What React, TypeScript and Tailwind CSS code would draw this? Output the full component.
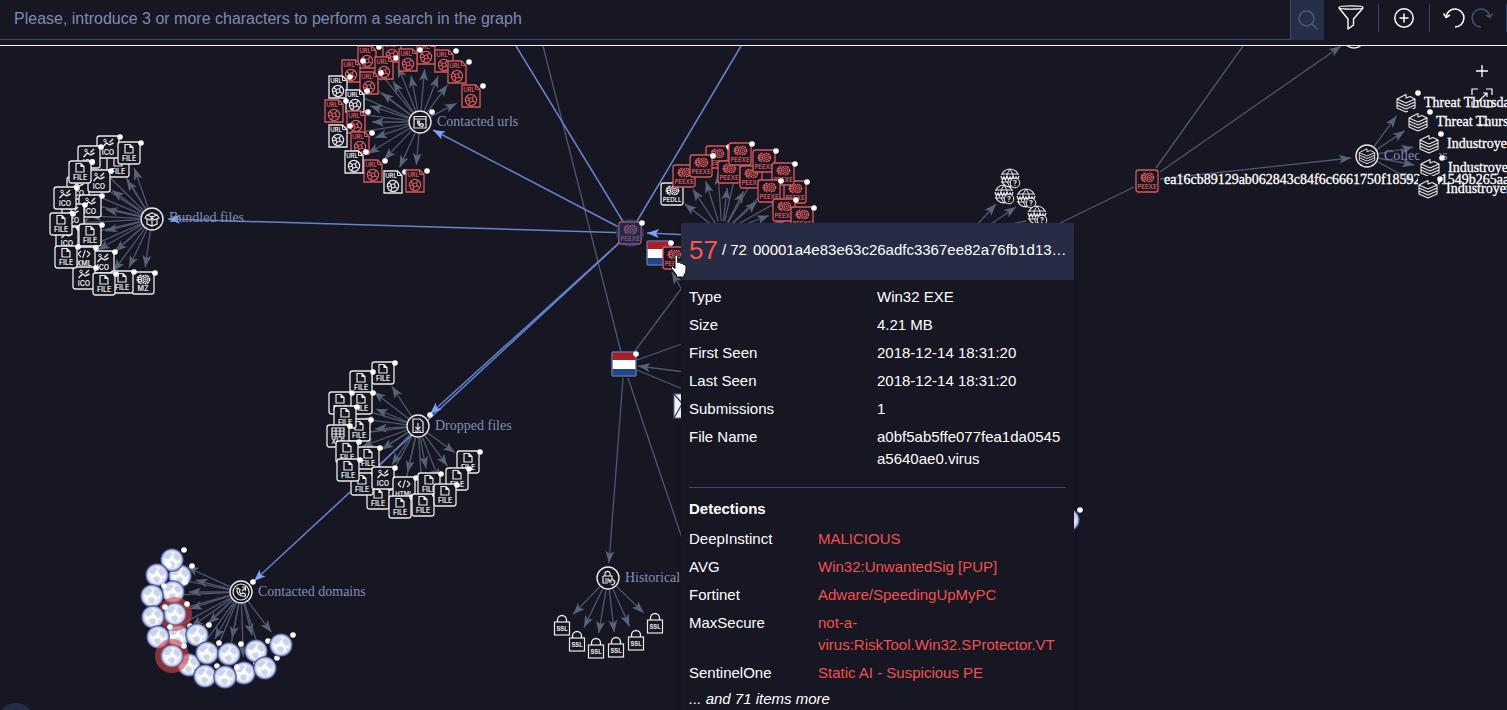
import type { ReactNode } from 'react'

type Point = [number, number]
type NodeKind = 'url' | 'file' | 'ico' | 'xml' | 'html' | 'xls' | 'mz' | 'peexe' | 'pedll' | 'globe' | 'ssl' | 'www' | 'stack'
type GraphNode = { x: number; y: number; kind: NodeKind; color?: string; alert?: boolean }

const BG = '#171623'
const WHITE = '#e9e9ec'
const RED = '#d9595b'
const EDGE = '#4d596f'
const BLUE = '#6584cf'

const node = (kind: NodeKind, x: number, y: number, color = WHITE, alert = false): GraphNode => ({ x, y, kind, color, alert })

// Nodes are listed bottom to top, later ones overlap earlier ones
const urlNodes = [
  node('url', 392, 51, RED),
  node('url', 367, 57, RED),
  node('url', 384, 68, RED),
  node('url', 426, 53, RED),
  node('url', 408, 60, RED),
  node('url', 444, 61, RED),
  node('url', 457, 72, RED),
  node('url', 471, 96, RED),
  node('url', 351, 71, RED),
  node('url', 369, 83, RED),
  node('url', 338, 87),
  node('url', 355, 101),
  node('url', 356, 122, RED),
  node('url', 334, 111, RED),
  node('url', 360, 143, RED),
  node('url', 338, 136),
  node('url', 373, 171, RED),
  node('url', 354, 162),
  node('url', 393, 182),
  node('url', 415, 181, RED),
]

const bundledNodes = [
  node('file', 118, 166),
  node('ico', 108, 147),
  node('file', 129, 153),
  node('ico', 89, 157),
  node('ico', 78, 188),
  node('ico', 99, 181),
  node('file', 80, 172),
  node('ico', 90, 206),
  node('ico', 73, 215),
  node('ico', 65, 198),
  node('ico', 67, 238),
  node('file', 90, 235),
  node('file', 61, 224),
  node('ico', 103, 262),
  node('xml', 84, 258),
  node('ico', 84, 278),
  node('file', 66, 257),
  node('mz', 143, 283),
  node('file', 122, 282),
  node('file', 104, 284),
]

const droppedNodes = [
  node('file', 383, 373),
  node('file', 361, 382),
  node('file', 361, 403),
  node('file', 340, 403),
  node('file', 359, 430),
  node('file', 345, 417),
  node('xls', 338, 436),
  node('file', 368, 458),
  node('file', 347, 452),
  node('file', 378, 498),
  node('file', 362, 484),
  node('file', 348, 470),
  node('ico', 383, 478),
  node('html', 404, 488),
  node('file', 429, 484),
  node('file', 400, 507),
  node('file', 423, 505),
  node('file', 468, 462),
  node('file', 457, 479),
  node('file', 445, 495),
]

const domainNodes = [
  node('globe', 180, 576),
  node('globe', 172, 560),
  node('globe', 157, 575),
  node('globe', 173, 592),
  node('globe', 152, 596),
  node('globe', 178, 636),
  node('globe', 175, 614, WHITE, true),
  node('globe', 153, 617),
  node('globe', 158, 637),
  node('globe', 197, 635),
  node('globe', 189, 665),
  node('globe', 172, 656, WHITE, true),
  node('globe', 207, 653),
  node('globe', 229, 654),
  node('globe', 205, 676),
  node('globe', 244, 673),
  node('globe', 225, 677),
  node('globe', 256, 651),
  node('globe', 265, 668),
  node('globe', 281, 645),
]

const sslNodes = [
  node('ssl', 562, 626),
  node('ssl', 577, 642),
  node('ssl', 596, 649),
  node('ssl', 616, 648),
  node('ssl', 636, 641),
  node('ssl', 655, 624),
]

const peNodes = [
  node('pedll', 672, 194),
  node('peexe', 684, 176, RED),
  node('peexe', 717, 157, RED),
  node('peexe', 701, 166, RED),
  node('peexe', 729, 172, RED),
  node('peexe', 740, 154, RED),
  node('peexe', 751, 177, RED),
  node('peexe', 764, 161, RED),
  node('peexe', 795, 192, RED),
  node('peexe', 783, 174, RED),
  node('peexe', 769, 191, RED),
  node('peexe', 784, 210, RED),
  node('peexe', 802, 218, RED),
]

const wwwNodes = [node('www', 1004, 194), node('www', 1010, 178), node('www', 1026, 198), node('www', 1037, 215)]

const collections = [
  { ...node('stack', 1406, 103), label: 'Threat Thursday' },
  { ...node('stack', 1418, 122), label: 'Threat Thursday' },
  { ...node('stack', 1429, 144), label: 'Industroyer' },
  { ...node('stack', 1430, 168), label: 'Industroyer' },
  { ...node('stack', 1428, 189), label: 'Industroyer' },
]

const summary = [
  ['Type', 'Win32 EXE'],
  ['Size', '4.21 MB'],
  ['First Seen', '2018-12-14 18:31:20'],
  ['Last Seen', '2018-12-14 18:31:20'],
  ['Submissions', '1'],
  ['File Name', 'a0bf5ab5ffe077fea1da0545a5640ae0.virus'],
]

const detections = [
  ['DeepInstinct', 'MALICIOUS'],
  ['AVG', 'Win32:UnwantedSig [PUP]'],
  ['Fortinet', 'Adware/SpeedingUpMyPC'],
  ['MaxSecure', 'not-a-virus:RiskTool.Win32.SProtector.VT'],
  ['SentinelOne', 'Static AI - Suspicious PE'],
]

function Edge({ from, to, blue = false, arrow = true }: { from: Point; to: Point; blue?: boolean; arrow?: boolean }) {
  const angle = (Math.atan2(to[1] - from[1], to[0] - from[0]) * 180) / Math.PI
  return (
    <g>
      <line x1={from[0]} y1={from[1]} x2={to[0]} y2={to[1]} stroke={blue ? BLUE : EDGE} strokeWidth={blue ? 1.5 : 1.3} />
      {arrow && (
        <path
          d="M0 0L-12 4.500L-9 0L-12 -4.500Z"
          fill={blue ? '#7fa2fb' : '#566379'}
          transform={`translate(${to[0]} ${to[1]}) rotate(${angle})`}
        />
      )}
    </g>
  )
}

// Arrows from a hub to every node around it
function Spokes({ hub, nodes }: { hub: Point; nodes: GraphNode[] }) {
  return (
    <>
      {nodes.map((n, i) => {
        const dx = n.x - hub[0]
        const dy = n.y - hub[1]
        const len = Math.hypot(dx, dy)
        const at = (d: number): Point => [hub[0] + (dx / len) * d, hub[1] + (dy / len) * d]
        return <Edge key={i} from={at(12)} to={at(len - 16)} />
      })}
    </>
  )
}

function Gears() {
  return (
    <g fill="none" stroke="currentColor">
      <circle cx="2.500" cy="-3.500" r="4" strokeWidth="1.600" strokeDasharray="2 .5" />
      <circle cx="2.500" cy="-3.500" r="2.200" strokeWidth="1" />
      <circle cx="2.500" cy="-3.500" r=".6" fill="currentColor" />
      <path d="M-1.500 -7.500A4 4 0 1 0 -1.500 .5" strokeWidth="1.800" strokeDasharray="2.200 .5" />
      <path d="M-2 -5.500A2.200 2.200 0 1 0 -2 -1.500M-4.500 -3.500H-1.500" strokeWidth="1.100" />
    </g>
  )
}

function Tile({ label, size = 7, children }: { label: string; size?: number; children: ReactNode }) {
  return (
    <>
      <rect x="-11" y="-11" width="22" height="22" rx="2.500" fill={BG} stroke="currentColor" strokeWidth="1.300" />
      {children}
      <text y="8" textAnchor="middle" fontSize={size} fontWeight="600" fontFamily="Inter, sans-serif" fill="currentColor">
        {label}
      </text>
    </>
  )
}

function Glyph({ kind }: { kind: NodeKind }) {
  switch (kind) {
    case 'url':
      return (
        <>
          <path d="M-9 -11H4.500L9 -6.500V11H-9Z" fill={BG} stroke="currentColor" strokeWidth="1.300" />
          <path d="M4.500 -11V-6.500H9" fill="none" stroke="currentColor" />
          <text x="-2" y="-4" textAnchor="middle" fontSize="6" fontWeight="600" fontFamily="Inter, sans-serif" fill="currentColor">
            URL
          </text>
          <g fill="none" stroke="currentColor" strokeWidth="1.200">
            <circle cx="0" cy="4" r="5.600" />
            <circle cx="0" cy="4" r="2" />
            <path d="M-4.500 .5L-1.400 2.800M1.500 5L5 6.500M-1 5.500L-2.500 9M1 2.300L3.500 -1M-5.500 5L-2 4" />
          </g>
        </>
      )
    case 'file':
      return (
        <Tile label="FILE">
          <path d="M-4 -8.500H1L4 -5.500V0H-4ZM1 -8.500V-5.500H4" fill="none" stroke="currentColor" strokeWidth="1.200" />
        </Tile>
      )
    case 'ico':
      return (
        <Tile label="ICO">
          <path d="M-5.500 0L-1.500 -4L1.500 -2L5.500 -4M1.500 -4.500L5 -8" fill="none" stroke="currentColor" strokeWidth="1.400" />
          <circle cx="-3" cy="-6.500" r="1.300" fill="none" stroke="currentColor" />
        </Tile>
      )
    case 'xml':
    case 'html':
      return (
        <Tile label={kind === 'xml' ? 'XML' : 'HTML'} size={kind === 'xml' ? 7 : 6}>
          <path d="M-3 -7L-6 -4L-3 -1M3 -7L6 -4L3 -1M1.300 -8L-1.300 0" fill="none" stroke="currentColor" strokeWidth="1.100" />
        </Tile>
      )
    case 'xls':
      return (
        <Tile label="XLS">
          <path d="M-6 -8H6V1H-6ZM-6 -5H6M-6 -2H6M-2 -8V1M2 -8V1" fill="none" stroke="currentColor" strokeWidth="1.200" />
        </Tile>
      )
    case 'mz':
      return (
        <Tile label="MZ">
          <Gears />
        </Tile>
      )
    case 'peexe':
    case 'pedll':
      return (
        <Tile label={kind === 'peexe' ? 'PEEXE' : 'PEDLL'} size={6}>
          <Gears />
        </Tile>
      )
    case 'globe':
      return (
        <>
          <circle r="12" fill="url(#globe)" />
          <path
            d="M-6 -6L-2 -8L1 -6L-1 -4L-3 -1L-6 -1L-8 -3ZM3 -7L7 -5L8 -1L5 1L3 -1L1 -3ZM-3 2L1 1L3 4L1 8L-2 7L-4 4ZM5 4L7 3L6 6Z"
            fill="#9aabd0"
            opacity=".45"
          />
        </>
      )
    case 'ssl':
      return (
        <>
          <path d="M-4.500 -4V-6A4.500 4.500 0 0 1 4.500 -6V-4" fill={BG} stroke="currentColor" strokeWidth="1.300" />
          <rect x="-7.500" y="-4" width="15" height="13" fill={BG} stroke="currentColor" strokeWidth="1.200" />
          <text y="5" textAnchor="middle" fontSize="6" fontWeight="700" fontFamily="Inter, sans-serif" fill="currentColor">
            SSL
          </text>
        </>
      )
    case 'www':
      return (
        <>
          <circle r="9" fill={BG} stroke="currentColor" strokeWidth="1.200" />
          <path d="M0 -9Q-7 0 0 9M0 -9Q7 0 0 9M-8 -4H8M-8 4H8" fill="none" stroke="currentColor" />
          <rect x="-10" y="-3" width="20" height="6" fill={BG} />
          <path d="M-9 -2L-7.500 2L-6 -1L-4.500 2L-3 -2L-1.500 2L0 -1L1.500 2L3 -2L4.500 2L6 -1L7.500 2L9 -2" fill="none" stroke="currentColor" strokeWidth="1.300" />
          <circle cx="5" cy="5" r="4.800" fill={BG} stroke="currentColor" />
          <text x="5" y="8" textAnchor="middle" fontSize="7" fontWeight="700" fontFamily="Inter, sans-serif" fill="currentColor">
            ?
          </text>
        </>
      )
    case 'stack':
      return (
        <>
          <path d="M-10 -13H10V13H-10Z" fill={BG} />
          <StackLines />
        </>
      )
  }
}

function StackLines() {
  return (
    <path
      d="M-9 -4L0 -8.500L0 -5L4 -6.500L9 -4L0 0ZM-9 -4V5L0 9L9 5V-4M-9 -1L0 3L9 -1M-9 2L0 6L9 2"
      fill="none"
      stroke="currentColor"
      strokeWidth="1.100"
      strokeLinejoin="round"
    />
  )
}

function Dot({ x, y }: { x: number; y: number }) {
  return <circle cx={x} cy={y} r="2.800" fill="#fff" />
}

function Nodes({ nodes }: { nodes: GraphNode[] }) {
  return (
    <>
      {nodes.map((n, i) => (
        <g key={i} transform={`translate(${n.x} ${n.y})`} color={n.color}>
          <Glyph kind={n.kind} />
          {n.alert && <circle r="14" fill="none" stroke="#d0474a" strokeOpacity=".6" strokeWidth="6" />}
          {n.kind !== 'ssl' && n.kind !== 'www' && <Dot x={12} y={-10} />}
        </g>
      ))}
    </>
  )
}

function Hub({ at, label, children }: { at: Point; label?: string; children?: ReactNode }) {
  return (
    <g transform={`translate(${at[0]} ${at[1]})`} color={WHITE}>
      <circle r="11" fill={BG} stroke="currentColor" strokeWidth="1.400" />
      <g fill="none" stroke="currentColor" strokeWidth="1.200">
        {children}
      </g>
      {label && (
        <text x="17" y="4" fontSize="14" fontFamily="'Liberation Serif', serif" fill="#8290b8">
          {label}
        </text>
      )}
    </g>
  )
}

function Flag({ x, y }: { x: number; y: number }) {
  return (
    <g transform={`translate(${x} ${y})`}>
      <rect x="-12" y="-12" width="24" height="24" fill="#fff" />
      <rect x="-12" y="-12" width="24" height="8" fill="#ae1c28" />
      <rect x="-12" y="5" width="24" height="7" fill="#21468b" />
      <rect x="-12" y="-12" width="24" height="24" rx="1" fill="none" stroke="#5c6f9c" strokeWidth="1.500" />
      <Dot x={12} y={-10} />
    </g>
  )
}

function Graph() {
  const root: Point = [630, 233]
  return (
    <svg className="absolute inset-0 h-full w-full" role="img" aria-label="Relations graph">
      <defs>
        <radialGradient id="globe">
          <stop offset="0" stopColor="#fff" />
          <stop offset=".65" stopColor="#f1f4fc" />
          <stop offset=".82" stopColor="#b4c0e6" />
          <stop offset=".92" stopColor="#56639c" />
          <stop offset="1" stopColor="#2b3362" stopOpacity=".5" />
        </radialGradient>
      </defs>
      <g transform="translate(0 -46)">
        <Edge from={[543, 46]} to={[621, 352]} arrow={false} />
        <Edge from={[632, 355]} to={[690, 277]} arrow={false} />
        <Edge from={[690, 305]} to={[672, 272]} />
        <Edge from={[637, 360]} to={[690, 341]} arrow={false} />
        <Edge from={[700, 374]} to={[638, 366]} />
        <Edge from={[637, 370]} to={[690, 392]} arrow={false} />
        <Edge from={[628, 378]} to={[690, 562]} arrow={false} />
        <Edge from={[623, 378]} to={[609, 563]} />
        <Edge from={[1050, 228]} to={[1134, 187]} arrow={false} />
        <Edge from={[1156, 168]} to={[1243, 46]} arrow={false} />
        <Edge from={[1160, 172]} to={[1341, 46]} />
        <Edge from={[1160, 179]} to={[1351, 158]} />
        <Edge from={[976, 226]} to={[996, 204]} />
        <Edge from={[988, 226]} to={[1016, 207]} />
        <Edge from={[1000, 226]} to={[1026, 221]} arrow={false} />

        <Spokes hub={[420, 122]} nodes={urlNodes} />
        <Spokes hub={[152, 219]} nodes={bundledNodes} />
        <Spokes hub={[418, 426]} nodes={droppedNodes} />
        <Spokes hub={[241, 592]} nodes={domainNodes} />
        <Spokes hub={[608, 578]} nodes={sslNodes} />
        <Spokes hub={[722, 233]} nodes={peNodes} />
        <Spokes hub={[1367, 156]} nodes={collections} />

        <Edge from={root} to={[516, 46]} blue arrow={false} />
        <Edge from={root} to={[741, 46]} blue arrow={false} />
        <Edge from={root} to={[433, 130]} blue />
        <Edge from={[690, 235]} to={[647, 233]} blue />
        <Edge from={root} to={[254, 581]} blue />
        <Edge from={root} to={[430, 414]} blue />

        <Nodes nodes={urlNodes} />
        <Nodes nodes={bundledNodes} />
        <Nodes nodes={droppedNodes} />
        <Nodes nodes={domainNodes} />
        <Nodes nodes={sslNodes} />
        <Nodes nodes={peNodes} />
        <Nodes nodes={wwwNodes} />
        <Nodes nodes={[node('globe', 1068, 520)]} />

        <Hub at={[420, 122]} label="Contacted urls">
          <path d="M-6 -5.500H6V6H-6ZM-6 -3H6M-2.500 -1Q-3 4 2.500 4.500L3.500 2.500L1.500 1.500L0 2.500L-1 1L-.5 -1Z" />
        </Hub>
        <Dot x={432} y={112} />
        <Hub at={[152, 219]}>
          <path d="M-5 0V5L0 7L5 5V0M-7 -1L-5 -4L0 -2L5 -4L7 -1L2 1L0 -2L-2 1ZM-5 -4L0 -6L5 -4M0 -1V7" />
        </Hub>
        <Edge from={root} to={[168, 219]} blue />
        <text x="169" y="222" fontSize="14" fontFamily="'Liberation Serif', serif" fill="#8290b8">
          Bundled files
        </text>
        <Hub at={[418, 426]} label="Dropped files">
          <path d="M-5 -7H2L5 -4V6.500H-5ZM0 -3V3M-2.500 1L0 3.500L2.500 1M-3 5H3" />
        </Hub>
        <Dot x={430} y={415} />
        <Hub at={[241, 592]} label="Contacted domains">
          <circle r="8" />
          <path d="M-4 -4Q-5 4 4 4.500L4.500 2L2 1L0 2L-1.500 0L-1 -2.500L-3 -4ZM1 -5H4.500V-1M4 -4L1 -1" />
        </Hub>
        <Dot x={253} y={582} />
        <Hub at={[608, 578]} label="Historical">
          <path d="M-5 -2H4V1M-5 -2V5H0M-3 -2V-4A2.600 2.600 0 0 1 2.200 -4V-2M-3 1H1M-3 3H0M2 3A2.500 2.500 0 1 1 3 6.500M1 1V4H4" />
        </Hub>
        <Hub at={[1354, 37]} />

        <circle cx="630" cy="233" r="14" fill="#27325a" />
        <g opacity=".8">
          <g transform="translate(630 233)" color="#d0626f">
            <Glyph kind="peexe" />
          </g>
          <circle cx="630" cy="233" r="13" fill="#3a4b86" opacity=".35" />
        </g>
        <Dot x={642} y={223} />
        <Flag x={659} y={253} />
        <Nodes nodes={[node('peexe', 674, 258, RED)]} />
        <Flag x={624} y={364} />
        <g transform="translate(686 406)">
          <rect x="-12" y="-12" width="24" height="24" fill="#f3f4f7" stroke="#5c6f9c" />
          <path d="M-12 -12L0 2L12 -12M-12 12L-4 -2" fill="none" stroke="#33415f" strokeWidth="1.300" />
        </g>

        <g transform="translate(1147 181)" color={RED}>
          <Glyph kind="peexe" />
        </g>
        <Hub at={[1367, 156]} label="Collections">
          <g transform="scale(.85)">
            <StackLines />
          </g>
        </Hub>
        <g fontSize="14" fontFamily="'Liberation Serif', serif" fill="#fff" stroke="#fff" strokeWidth=".3">
          <text x="1164" y="184">ea16cb89129ab062843c84f6c6661750f185929e41549b265aa</text>
        </g>
        <Nodes nodes={collections} />
        <g fontSize="14" fontFamily="'Liberation Serif', serif" fill="#fff" stroke="#fff" strokeWidth=".3">
          {collections.map((c) => (
            <text key={c.y} x={c.x + 18} y={c.y + 4}>
              {c.label}
            </text>
          ))}
        </g>
        <circle cx="16" cy="721" r="18" fill="#232c49" />
      </g>
    </svg>
  )
}

function Toolbar() {
  return (
    <header className="flex h-[46px] shrink-0 items-start border-b border-gray-100">
      <form className="flex h-10 flex-1" onSubmit={(e) => e.preventDefault()}>
        <input
          type="text"
          aria-label="Search in the graph"
          placeholder="Please, introduce 3 or more characters to perform a search in the graph"
          className="min-w-0 flex-1 border-r border-b border-[#3a4a70] bg-transparent px-3.5 pb-0.5 text-base text-white outline-none placeholder:text-[#7c8bb3]"
        />
        <button type="submit" aria-label="Search" className="flex w-[33px] items-center justify-center bg-[#252f48]">
          <svg width="20" height="20" viewBox="0 0 20 20" fill="none" stroke="#4d5b7c" strokeWidth="1.400">
            <circle cx="8.500" cy="8.500" r="7.500" />
            <path d="M14 14L19.500 19.500" />
          </svg>
        </button>
      </form>
      <div className="flex h-9 items-center text-white">
        <button type="button" aria-label="Filter" className="flex w-[54px] justify-center">
          <svg width="26" height="26" viewBox="0 0 26 26" fill="none" stroke="currentColor" strokeWidth="1.400" strokeLinejoin="round">
            <ellipse cx="13" cy="2.500" rx="12" ry="1.600" />
            <path d="M1 3L10 14V24L15.500 20V14L25 3" />
          </svg>
        </button>
        <span className="h-7 w-px bg-[#33426a]" />
        <button type="button" aria-label="Add node" className="flex w-[50px] justify-center">
          <svg width="20" height="20" viewBox="0 0 20 20" fill="none" stroke="currentColor" strokeWidth="1.500">
            <circle cx="10" cy="10" r="9.200" />
            <path d="M10 5.500V14.500M5.500 10H14.500" />
          </svg>
        </button>
        <span className="h-7 w-px bg-[#33426a]" />
        <button type="button" aria-label="Undo" className="ml-2.5 flex w-7 justify-center">
          <svg width="22" height="22" viewBox="0 0 22 22" fill="none" stroke="currentColor" strokeWidth="1.500">
            <path d="M3 10A9 9 0 1 1 12 20M.5 6.500L3 10.500L7 8" />
          </svg>
        </button>
        <button type="button" aria-label="Redo" className="flex w-7 justify-center text-[#46536f]">
          <svg width="22" height="22" viewBox="0 0 22 22" fill="none" stroke="currentColor" strokeWidth="1.500">
            <path d="M19 10A9 9 0 1 0 10 20M21.500 6.500L19 10.500L15 8" />
          </svg>
        </button>
        <span className="ml-2.5 h-7 w-px bg-[#33426a]" />
      </div>
    </header>
  )
}

function ZoomControls() {
  return (
    <div className="absolute top-4 right-3.5 flex flex-col items-center gap-2 text-white">
      <button type="button" aria-label="Zoom in">
        <svg width="20" height="18" viewBox="0 0 20 18" stroke="currentColor" strokeWidth="1.300">
          <path d="M10 3V15M4 9H16" />
        </svg>
      </button>
      <button type="button" aria-label="Fit to screen">
        <svg width="22" height="20" viewBox="0 0 22 20" fill="none" stroke="currentColor" strokeWidth="1.200">
          <path d="M1 7V1H7M15 1H21V7M21 13V19H15M7 19H1V13M6 15L16 5M12 5H16V9" />
        </svg>
      </button>
      <button type="button" aria-label="Zoom out">
        <svg width="20" height="18" viewBox="0 0 20 18" stroke="currentColor" strokeWidth="1.300">
          <path d="M4 9H16" />
        </svg>
      </button>
    </div>
  )
}

function NodeTooltip() {
  return (
    <aside className="absolute top-[177px] left-[681px] w-[393px] bg-[#171623] text-[15px] leading-[22px] text-white shadow-md">
      <h2 className="flex h-[57px] items-center bg-[#252c43] pb-1 pl-2">
        <span className="mr-1 text-[26px] text-[#ff5550]">57</span>
        <span className="mr-1.5 shrink-0">/ 72</span>
        <span className="truncate">00001a4e83e63c26adfc3367ee82a76fb1d13…</span>
      </h2>
      <div className="px-2 pt-1.5">
        <dl className="flex flex-col gap-1.5 pb-[17px]">
          {summary.map(([label, value]) => (
            <div key={label} className="flex">
              <dt className="w-[188px] shrink-0">{label}</dt>
              <dd className="break-all">{value}</dd>
            </div>
          ))}
        </dl>
        <h3 className="border-t border-[#3b4663] pt-2.5 pb-2 font-bold">Detections</h3>
        <dl className="flex flex-col gap-1.5">
          {detections.map(([label, value]) => (
            <div key={label} className="flex">
              <dt className="w-[129px] shrink-0">{label}</dt>
              <dd className="text-[#f0524f]">{value}</dd>
            </div>
          ))}
        </dl>
        <p className="py-1 italic">... and 71 items more</p>
      </div>
    </aside>
  )
}

function Pointer() {
  return (
    <svg className="absolute top-[208px] left-[670px]" width="18" height="24" viewBox="0 0 18 24" aria-hidden="true">
      <path
        d="M5 2.500Q5 1 6.300 1T7.700 2.500V8.500Q10 7.500 10.500 9.300Q13 8.500 13.300 10.500Q16 10 16 12.500V16Q16 19 14 21V23H6.500V21L1.500 14.500Q.8 12.500 2.500 12.500L5 14.500Z"
        fill="#fff"
        stroke="#111"
        strokeWidth="1"
      />
    </svg>
  )
}

export default function App() {
  return (
    <div className="flex h-screen flex-col overflow-hidden bg-[#171623] font-['Liberation_Sans',Arial,sans-serif]">
      <Toolbar />
      <main className="relative flex-1 overflow-hidden">
        <Graph />
        <ZoomControls />
        <NodeTooltip />
        <Pointer />
      </main>
    </div>
  )
}
